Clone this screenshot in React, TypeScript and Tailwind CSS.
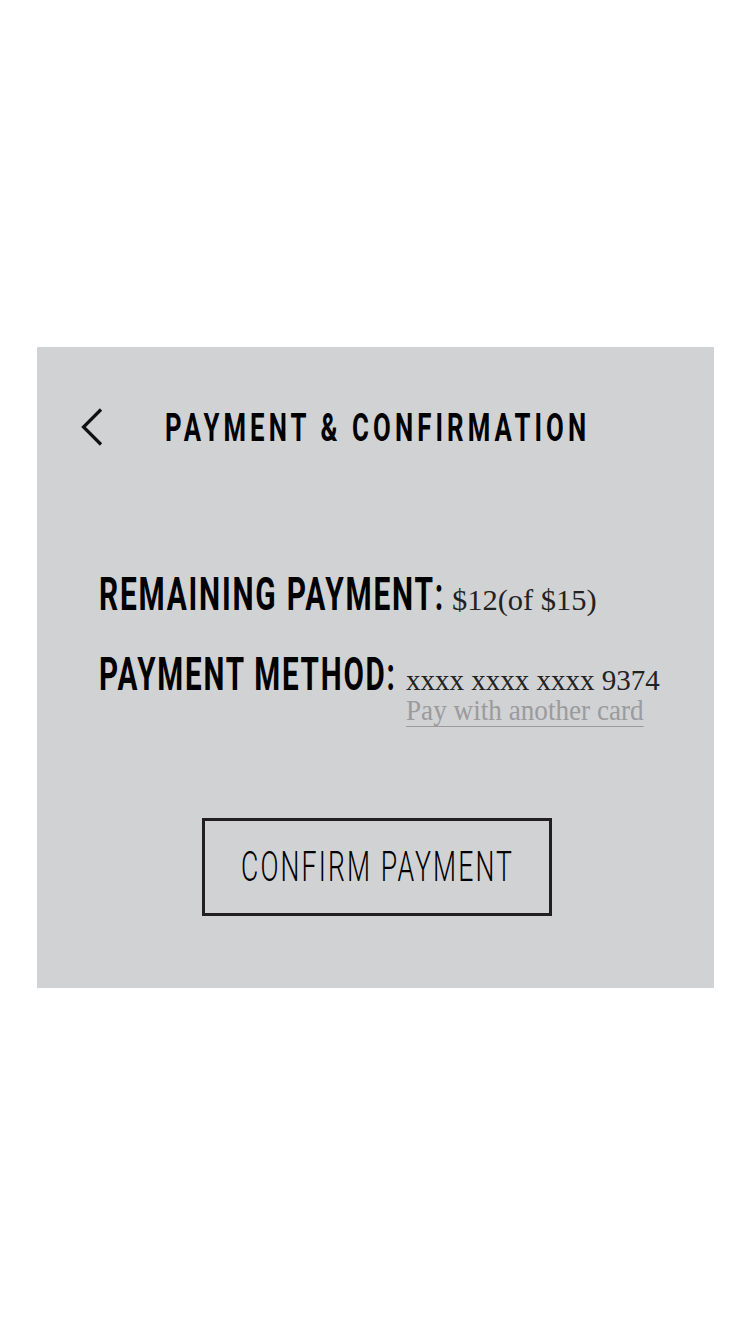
import React, { useLayoutEffect, useRef, useState } from "react";

const cond = { fontFamily: 'Roboto, "Liberation Sans", sans-serif' };
const serif = { fontFamily: '"Liberation Serif", "DejaVu Serif", serif' };

function Fit({
  w,
  outer,
  inner,
  font,
  children,
}: {
  w: number;
  outer: string;
  inner: string;
  font: React.CSSProperties;
  children: React.ReactNode;
}) {
  const ref = useRef<HTMLSpanElement>(null);
  const [s, setS] = useState(1);
  useLayoutEffect(() => {
    if (ref.current) setS(w / ref.current.offsetWidth);
  }, [w]);
  return (
    <span className={"inline-block shrink-0 whitespace-nowrap " + outer}>
      <span
        ref={ref}
        className={"inline-block origin-left whitespace-nowrap " + inner}
        style={{ ...font, transform: `scaleX(${s})` }}
      >
        {children}
      </span>
    </span>
  );
}

export default function App() {
  return (
    <div className="w-[751px] h-[1335px] overflow-hidden bg-white pt-[347px] px-[37px]">
      <div className="h-[641px] bg-[#d1d2d4] flex flex-col overflow-hidden">
        <div className="flex items-center h-[39px] mt-[62px] pl-[43px]">
          <svg width="24" height="38" viewBox="0 0 24 38" className="shrink-0 -mt-[3px]">
            <path d="M21 1.5 L3.5 19 L21 36.5" fill="none" stroke="#111" strokeWidth="3.2" />
          </svg>
          <span className="ml-[61px]">
            <Fit w={425} outer="w-[425px]" inner="text-[39px] font-bold tracking-[0.16em] text-black leading-none" font={cond}>
              PAYMENT &amp; CONFIRMATION
            </Fit>
          </span>
        </div>
        <div className="pl-[62px] mt-[123px] flex items-baseline">
          <Fit w={346} outer="w-[346px]" inner="text-[46px] font-bold tracking-[0.06em] text-black leading-none" font={cond}>
            REMAINING PAYMENT:
          </Fit>
          <Fit w={145} outer="w-[145px] ml-[7px]" inner="text-[29px] text-[#222] leading-none" font={serif}>
            $12(of $15)
          </Fit>
        </div>
        <div className="pl-[62px] mt-[34px] flex items-baseline">
          <Fit w={298} outer="w-[298px]" inner="text-[46px] font-bold tracking-[0.06em] text-black leading-none" font={cond}>
            PAYMENT METHOD:
          </Fit>
          <div className="ml-[9px] flex flex-col">
            <Fit w={254} outer="w-[254px]" inner="text-[29px] text-[#222] leading-none" font={serif}>
              xxxx xxxx xxxx 9374
            </Fit>
            <Fit
              w={238}
              outer="w-[238px]"
              inner="text-[29px] text-[#9b9b9d] leading-none underline underline-offset-[6px] decoration-1"
              font={serif}
            >
              Pay with another card
            </Fit>
          </div>
        </div>
        <div className="flex justify-center mt-[92px] pl-[2px]">
          <div className="w-[350px] h-[98px] border-[3.5px] border-[#231f20] flex items-center justify-center">
            <Fit w={273} outer="w-[273px] ml-[2px]" inner="text-[42px] font-light tracking-[0.08em] text-black leading-none" font={cond}>
              CONFIRM PAYMENT
            </Fit>
          </div>
        </div>
      </div>
    </div>
  );
}
